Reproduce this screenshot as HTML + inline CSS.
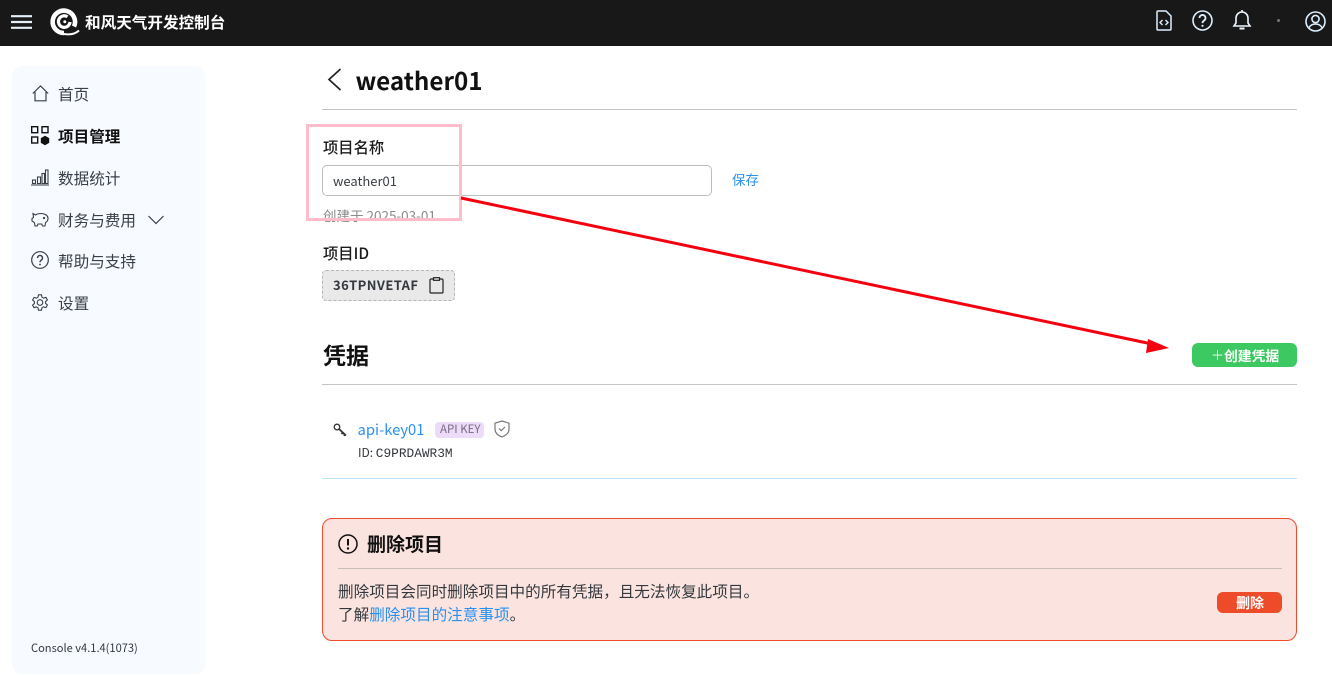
<!DOCTYPE html>
<html lang="zh-CN">
<head>
<meta charset="utf-8">
<title>和风天气开发控制台</title>
<style>
html,body{margin:0;padding:0;background:#fff;}
body{width:1332px;height:675px;overflow:hidden;position:relative;font-family:"Noto Sans CJK SC","Liberation Sans",sans-serif;color:#1f2329;}
.a{position:absolute;white-space:nowrap;line-height:1;}
svg{position:absolute;display:block;overflow:visible;}
.nav{font-size:15.6px;color:#3a3f45;left:58px;}
</style>
</head>
<body>
<!-- Top bar -->
<div class="a" style="left:0;top:0;width:1332px;height:46px;background:#181818;"></div>
<svg style="left:11px;top:15px" width="22" height="14" viewBox="0 0 22 14"><path d="M0 1.2H21M0 7H21M0 12.8H21" stroke="#e4eff6" stroke-width="2.2" fill="none"/></svg>
<svg style="left:50px;top:8px" width="30" height="28" viewBox="0 0 30 28"><path d="M24 18.500A11.200 11.200 0 1 0 14 25" fill="none" stroke="#fff" stroke-width="4.600"/><path d="M17.500 8.800a5.800 5.800 0 1 0 2.500 5.200" fill="none" stroke="#fff" stroke-width="3.200"/><circle cx="14.800" cy="13.800" r="1.500" fill="#fff"/><path d="M13 25.800c6 1.200 12 .4 16-3.300" fill="none" stroke="#fff" stroke-width="2"/></svg>
<div class="a" style="left:85px;top:15px;font-size:15.6px;font-weight:700;color:#fff;">和风天气开发控制台</div>

<svg style="left:1156px;top:10px" width="16" height="21" viewBox="0 0 16 21" fill="none" stroke="#dcefff" stroke-width="1.5"><path d="M2 1h8l5 5v13a1 1 0 0 1-1 1H2a1 1 0 0 1-1-1V2a1 1 0 0 1 1-1z"/><path d="M6.500 10l-2.500 2.500 2.500 2.500M9.500 10l2.500 2.500-2.500 2.500" stroke-width="1.400"/></svg>
<svg style="left:1192px;top:10px" width="21" height="21" viewBox="0 0 21 21" fill="none" stroke="#dcefff" stroke-width="1.600"><circle cx="10.500" cy="10.500" r="9.500"/><path d="M7.500 8a3 3 0 1 1 4.600 2.500c-1 .7-1.600 1.200-1.600 2.600" stroke-width="1.800"/><circle cx="10.500" cy="15.800" r="1.100" fill="#dcefff" stroke="none"/></svg>
<svg style="left:1233px;top:9px" width="18" height="22" viewBox="0 0 18 22" fill="none" stroke="#eef6ff" stroke-width="1.600"><path d="M1 17h16l-2-3V9a6 6 0 0 0-12 0v5z"/><path d="M9 1v2"/><path d="M6.500 19.500h5" stroke-width="2"/></svg>
<div class="a" style="left:1277px;top:19px;width:3px;height:3px;border-radius:50%;background:#777;"></div>
<svg style="left:1305px;top:11px" width="21" height="21" viewBox="0 0 21 21" fill="none" stroke="#dcefff" stroke-width="1.600"><circle cx="10.500" cy="10.500" r="9.500"/><circle cx="10.500" cy="8" r="3.600"/><path d="M3.800 17c1.500-3 4-4 6.700-4s5.200 1 6.700 4"/></svg>

<!-- Sidebar -->
<div class="a" style="left:12px;top:66px;width:193px;height:608px;background:#f7fbff;border-radius:10px;"></div>
<svg style="left:32px;top:85px" width="17" height="17" viewBox="0 0 17 17" fill="none" stroke="#3a3f45" stroke-width="1.200"><path d="M.8 8.500L8.500 1l7.700 7.500M3 7v8.800h11V7"/></svg>
<div class="a nav" style="top:87px;">首页</div>
<svg style="left:31px;top:126px" width="18" height="18" viewBox="0 0 18 18" fill="none" stroke="#111" stroke-width="1.400"><rect x=".7" y=".7" width="6" height="6"/><rect x="11" y=".7" width="6" height="6"/><rect x=".7" y="11" width="6" height="6"/><path d="M14 10.500l3.500 2v4l-3.500 2-3.500-2v-4z" fill="#111"/></svg>
<div class="a nav" style="top:129px;font-weight:700;color:#111;">项目管理</div>
<svg style="left:31px;top:169px" width="18" height="17" viewBox="0 0 18 17" fill="none" stroke="#3a3f45" stroke-width="1.100"><path d="M0 16h18"/><rect x="1.500" y="11" width="3" height="3.500"/><rect x="6.500" y="8" width="3" height="6.500"/><rect x="11" y="4.500" width="2.500" height="10"/><rect x="14.500" y="1" width="2.500" height="13.500"/></svg>
<div class="a nav" style="top:171px;">数据统计</div>
<svg style="left:31px;top:212px" width="18" height="16" viewBox="0 0 18 16" fill="none" stroke="#3a3f45" stroke-width="1.100"><path d="M2 1.500l2.500 1.500C6 2 8 1.500 10 1.500c4 0 7 2 7 5 0 2-1 3.200-2.500 4.200L14 14h-2.500l-.7-2H7l-.8 2H4l-.5-3.200C2.500 10 2 9.500 1 9V6.500l1.500-1z"/><circle cx="13" cy="6" r=".6" fill="#3a3f45"/></svg>
<div class="a nav" style="top:213px;">财务与费用</div>
<svg style="left:148px;top:215px" width="16" height="10" viewBox="0 0 16 10" fill="none" stroke="#3a3f45" stroke-width="1.200"><path d="M.5 1l7.500 7.500L15.500 1"/></svg>
<svg style="left:31px;top:251px" width="18" height="18" viewBox="0 0 18 18" fill="none" stroke="#3a3f45" stroke-width="1.200"><circle cx="9" cy="9" r="8.300"/><path d="M6.500 7a2.500 2.500 0 1 1 3.800 2.100c-.9.600-1.300 1-1.300 2.200" stroke-width="1.400"/><circle cx="9" cy="13.500" r=".9" fill="#3a3f45" stroke="none"/></svg>
<div class="a nav" style="top:254px;">帮助与支持</div>
<svg style="left:31px;top:294px" width="18" height="18" viewBox="0 0 18 18" fill="none" stroke="#3a3f45" stroke-width="1.100"><path d="M7.500.8h3l.5 2.400 1.600.9 2.300-.8 1.500 2.600-1.800 1.600v1.900l1.800 1.600-1.500 2.600-2.300-.8-1.600.9-.5 2.500h-3L7 13.800l-1.600-.9-2.300.8-1.500-2.600 1.800-1.600V7.600L1.600 6l1.500-2.600 2.300.8L7 3.200z"/><circle cx="9" cy="8.500" r="2.800"/></svg>
<div class="a nav" style="top:296px;">设置</div>
<div class="a" style="left:31px;top:643px;font-size:11.100px;color:#33383e;">Console v4.1.4(1073)</div>

<!-- Header -->
<svg style="left:327px;top:68px" width="15" height="23" viewBox="0 0 15 23" fill="none" stroke="#222" stroke-width="1.700"><path d="M13.500 1L2 11.500 13.500 22"/></svg>
<div class="a" style="left:355.500px;top:68px;font-size:24.200px;font-weight:700;color:#111;">weather01</div>
<div class="a" style="left:322px;top:109px;width:975px;height:1px;background:#c4c4c4;"></div>

<!-- Project name -->
<div class="a" style="left:323px;top:140px;font-size:15.300px;font-weight:500;color:#1a1a1a;">项目名称</div>
<div class="a" style="left:322px;top:165px;width:388px;height:29px;border:1px solid #bdbdbd;border-radius:5px;background:#fff;"></div>
<div class="a" style="left:333px;top:174px;font-size:13px;color:#3a3f45;">weather01</div>
<div class="a" style="left:732px;top:173px;font-size:13.500px;color:#2a90f0;">保存</div>
<div class="a" style="left:323px;top:209px;font-size:13.500px;color:#8a8a8a;">创建于 2025-03-01</div>
<div class="a" style="left:306px;top:124px;width:150px;height:91px;border:3px solid #ffbccb;"></div>

<!-- Project ID -->
<div class="a" style="left:323px;top:246px;font-size:15.300px;font-weight:500;color:#1a1a1a;">项目ID</div>
<div class="a" style="left:322px;top:270px;width:131px;height:29px;background:#e9e9e9;border:1px dashed #b5b5b5;border-radius:4px;"></div>
<div class="a" style="left:333px;top:278px;font-size:13px;font-weight:700;letter-spacing:.4px;color:#33383e;">36TPNVETAF</div>
<svg style="left:429px;top:277px" width="15" height="17" viewBox="0 0 15 17" fill="none" stroke="#222" stroke-width="1.200"><path d="M4 2H2a1 1 0 0 0-1 1v12a1 1 0 0 0 1 1h11a1 1 0 0 0 1-1V3a1 1 0 0 0-1-1h-2"/><rect x="4.500" y=".7" width="6" height="2.600" fill="#e9e9e9"/></svg>

<!-- Credentials -->
<div class="a" style="left:323px;top:343px;font-size:23px;font-weight:700;color:#111;">凭据</div>
<div class="a" style="left:1192px;top:343px;width:105px;height:24px;background:#3dc962;border-radius:6px;"></div>
<div class="a" style="left:1211px;top:348px;font-size:13px;font-weight:700;color:#fff;"><span style="font-weight:400;">＋</span></div>
<div class="a" style="left:1224px;top:349px;font-size:13.800px;font-weight:700;color:#fff;">创建凭据</div>
<div class="a" style="left:322px;top:384px;width:975px;height:1px;background:#c4c4c4;"></div>

<svg style="left:333px;top:423px" width="14" height="14" viewBox="0 0 14 14" fill="none" stroke="#333" stroke-width="1.300"><circle cx="4" cy="4" r="2.800"/><path d="M6 6l7 6.500M10 9.500l-1.500 1.500M12 11.500l-1.200 1.200" stroke-width="1.800"/></svg>
<div class="a" style="left:357.500px;top:423px;font-size:14.800px;color:#2a90f0;">api-key01</div>
<div class="a" style="left:435px;top:422px;width:49px;height:16px;background:#ecdcfa;border-radius:4px;"></div>
<div class="a" style="left:440px;top:424px;font-size:11.500px;color:#7a6a85;">API KEY</div>
<svg style="left:494px;top:420px" width="16" height="18" viewBox="0 0 16 18" fill="none" stroke="#777" stroke-width="1.200"><path d="M8 1l7 2.200V9c0 3.800-3 6.500-7 8-4-1.500-7-4.200-7-8V3.200z"/><path d="M5 8.500l2.200 2.200L11 7"/></svg>
<div class="a" style="left:358px;top:447px;font-size:12px;color:#33383e;">ID: <span style="font-family:'Liberation Mono',monospace;font-size:12.800px;">C9PRDAWR3M</span></div>
<div class="a" style="left:322px;top:478px;width:975px;height:1px;background:#bfe3fb;"></div>

<!-- Danger box -->
<div class="a" style="left:322px;top:518px;width:973px;height:121px;background:#fbe4df;border:1px solid #ee4b2b;border-radius:10px;"></div>
<svg style="left:338px;top:534px" width="20" height="20" viewBox="0 0 20 20" fill="none" stroke="#111" stroke-width="1.500"><circle cx="10" cy="10" r="9"/><path d="M10 5v6.500" stroke-width="2"/><circle cx="10" cy="14.500" r="1.200" fill="#111" stroke="none"/></svg>
<div class="a" style="left:367px;top:534px;font-size:19px;font-weight:700;color:#111;">删除项目</div>
<div class="a" style="left:338px;top:568px;width:944px;height:1px;background:#c9bcb9;"></div>
<div class="a" style="left:338px;top:584px;font-size:15.600px;color:#33383e;">删除项目会同时删除项目中的所有凭据，且无法恢复此项目。</div>
<div class="a" style="left:338px;top:607px;font-size:15.600px;color:#33383e;">了解<span style="color:#2a90f0;">删除项目的注意事项</span>。</div>
<div class="a" style="left:1217px;top:592px;width:65px;height:21px;background:#ee4b2b;border-radius:6px;"></div>
<div class="a" style="left:1236px;top:596px;font-size:14px;font-weight:700;color:#fff;">删除</div>

<!-- Red arrow -->
<svg style="left:0;top:0" width="1332" height="675" viewBox="0 0 1332 675"><path d="M461 198L1152 344" stroke="#f5000f" stroke-width="3" fill="none"/><path d="M1169 348L1148 339L1146 353Z" fill="#f5000f"/></svg>
</body>
</html>
